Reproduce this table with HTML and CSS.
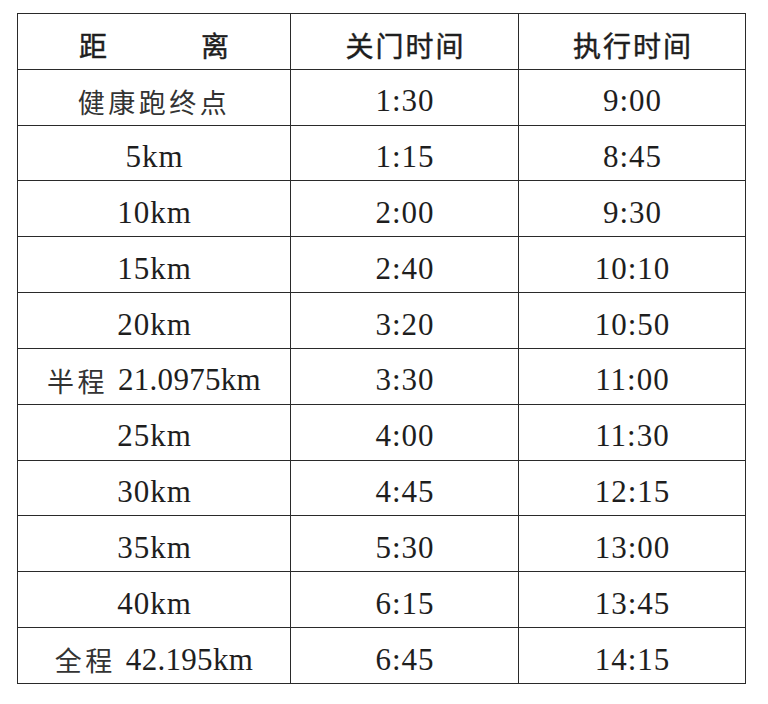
FILE: index.html
```html
<!DOCTYPE html>
<html lang="zh-CN">
<head>
<meta charset="utf-8">
<title>关门时间</title>
<link rel="stylesheet" href="styles.css">
</head>
<body>
<div class="table">
  <div class="cell head"><span class="spread"><span>距</span><span>离</span></span></div>
  <div class="cell head">关门时间</div>
  <div class="cell head">执行时间</div>

  <div class="cell zh">健康跑终点</div>
  <div class="cell num">1:30</div>
  <div class="cell num">9:00</div>

  <div class="cell num">5km</div>
  <div class="cell num">1:15</div>
  <div class="cell num">8:45</div>

  <div class="cell num">10km</div>
  <div class="cell num">2:00</div>
  <div class="cell num">9:30</div>

  <div class="cell num">15km</div>
  <div class="cell num">2:40</div>
  <div class="cell num">10:10</div>

  <div class="cell num">20km</div>
  <div class="cell num">3:20</div>
  <div class="cell num">10:50</div>

  <div class="cell mix"><span class="zh">半程</span><span class="num gap">21.0975km</span></div>
  <div class="cell num">3:30</div>
  <div class="cell num">11:00</div>

  <div class="cell num">25km</div>
  <div class="cell num">4:00</div>
  <div class="cell num">11:30</div>

  <div class="cell num">30km</div>
  <div class="cell num">4:45</div>
  <div class="cell num">12:15</div>

  <div class="cell num">35km</div>
  <div class="cell num">5:30</div>
  <div class="cell num">13:00</div>

  <div class="cell num">40km</div>
  <div class="cell num">6:15</div>
  <div class="cell num">13:45</div>

  <div class="cell mix"><span class="zh">全程</span><span class="num gap">42.195km</span></div>
  <div class="cell num">6:45</div>
  <div class="cell num">14:15</div>
</div>
</body>
</html>
```

FILE: styles.css
```css
html, body {
  margin: 0;
  padding: 0;
  background: #ffffff;
}

body {
  padding: 13px 0 0 17px;
  color: #1e1e1e;
}

.table {
  display: grid;
  grid-template-columns: 273px 228px 227px;
  grid-template-rows: repeat(12, 55.833px);
  width: 729px;
  box-sizing: border-box;
  border-top: 1px solid #2a2a2a;
  border-left: 1px solid #2a2a2a;
}

.cell {
  box-sizing: border-box;
  border-right: 1px solid #2a2a2a;
  border-bottom: 1px solid #2a2a2a;
  display: flex;
  align-items: center;
  justify-content: center;
  padding-top: 8px;
  white-space: nowrap;
}

.head {
  font-family: "Noto Sans CJK SC", sans-serif;
  font-size: 28px;
  font-weight: 400;
  letter-spacing: 2px;
  padding-left: 2px;
  -webkit-text-stroke: 0.45px #1e1e1e;
}

.spread {
  display: flex;
  justify-content: space-between;
  width: 152px;
}

.zh {
  font-family: "Noto Sans CJK SC", sans-serif;
  font-size: 27px;
  font-weight: 400;
  letter-spacing: 3.5px;
  color: #333333;
}

.num {
  font-family: "Liberation Serif", serif;
  font-size: 31px;
  letter-spacing: 1px;
  color: #1e1e1e;
}

.cell.num {
  padding-left: 1px;
}

.mix {
  gap: 0;
}

.gap {
  margin-left: 10px;
  letter-spacing: 0.3px;
}
```
